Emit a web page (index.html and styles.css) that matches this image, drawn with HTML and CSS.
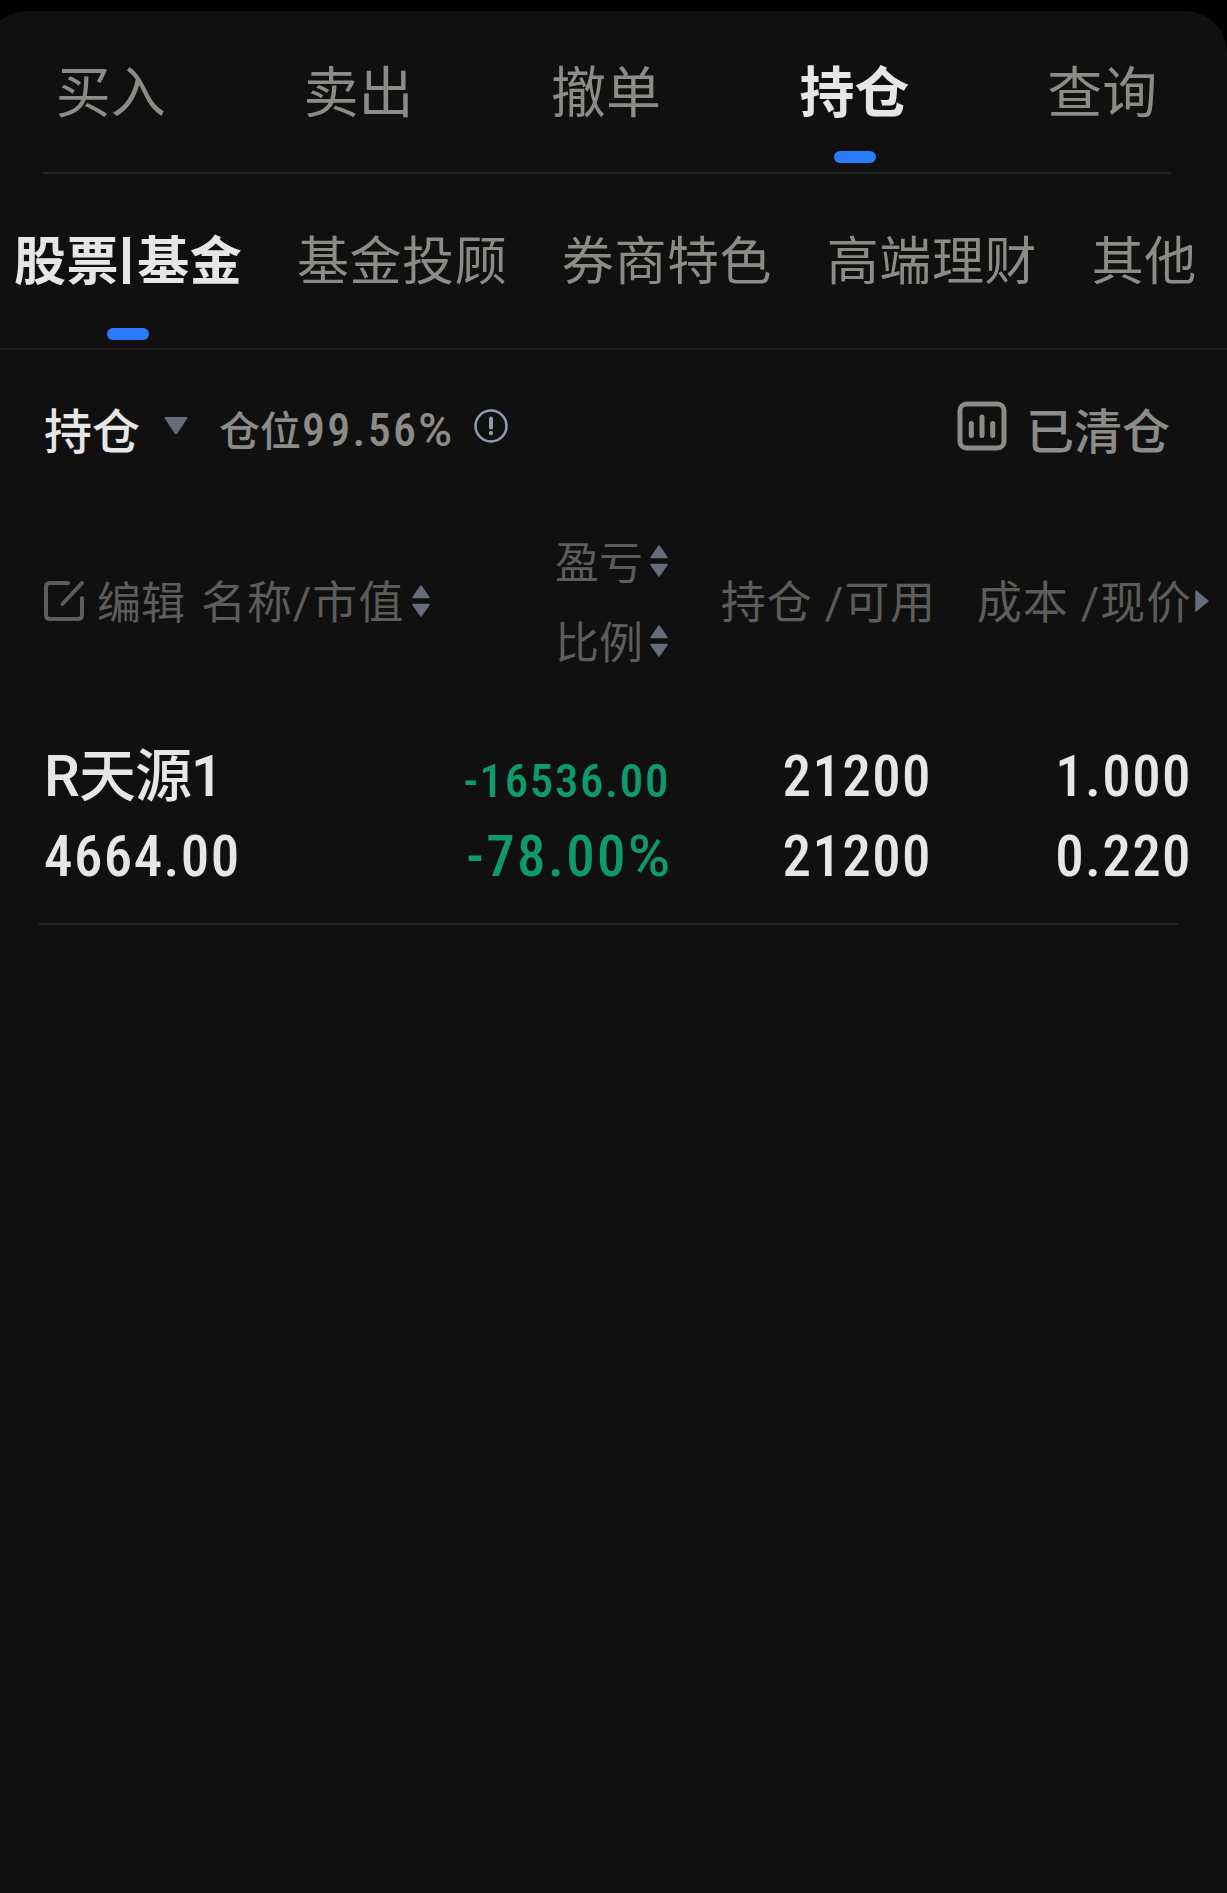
FILE: index.html
```html
<!DOCTYPE html>
<html lang="zh-CN">
<head>
    <meta charset="UTF-8">
    <meta name="viewport" content="width=device-width, initial-scale=1.0">
    <title>持仓</title>
    <link rel="stylesheet" href="styles.css">
</head>
<body>
    <div class="panel">
        <nav class="tabs">
            <div class="tab">买入</div>
            <div class="tab">卖出</div>
            <div class="tab">撤单</div>
            <div class="tab active">持仓</div>
            <div class="tab">查询</div>
        </nav>

        <nav class="subtabs">
            <div class="subtab active">股票<span class="bar"></span>基金</div>
            <div class="subtab">基金投顾</div>
            <div class="subtab">券商特色</div>
            <div class="subtab">高端理财</div>
            <div class="subtab">其他</div>
        </nav>

        <div class="toolbar">
            <span class="title">持仓</span>
            <svg class="caret" viewBox="0 0 24 18"><path d="M1.500 0h21q1.500 0 .8 1.400L13.300 16.500q-1.300 1.600-2.600 0L.7 1.400Q0 0 1.500 0z"/></svg>
            <span class="ratio">仓位<span class="num">99.56<span class="pct">%</span></span></span>
            <svg class="info" viewBox="0 0 34 34">
                <circle cx="17" cy="17" r="15.500"/>
                <path d="M17 9.500v9"/>
                <path d="M17 23.700v.6"/>
            </svg>
            <div class="cleared">
                <svg class="chart" viewBox="0 0 50 50">
                    <rect x="3" y="3" width="44" height="44" rx="6.500"/>
                    <path d="M14.300 22.500v12M25 16v18.500M35.700 22.500v12"/>
                </svg>
                <span>已清仓</span>
            </div>
        </div>

        <div class="grid head">
            <div class="cell-name">
                <svg class="edit" viewBox="0 0 40 40">
                    <path d="M24 2H6Q2 2 2 6v28q0 4 4 4h28q4 0 4-4V17"/>
                    <path d="M38 2L18.500 23"/>
                </svg>
                <span class="edit-label">编辑</span>
                <span class="wide">名称/市值</span>
                <svg class="sort" viewBox="0 0 18 32"><path d="M9 1l8 11.500H1zM9 31l8-11.500H1z"/></svg>
            </div>
            <div class="cell-profit">
                <div class="line">盈亏<svg class="sort" viewBox="0 0 18 32"><path d="M9 1l8 11.500H1zM9 31l8-11.500H1z"/></svg></div>
                <div class="line">比例<svg class="sort" viewBox="0 0 18 32"><path d="M9 1l8 11.500H1zM9 31l8-11.500H1z"/></svg></div>
            </div>
            <div class="cell wide">持仓 /可用</div>
            <div class="cell wide last">成本 /现价<svg class="more" viewBox="0 0 14 22"><path d="M1 1l12 10L1 21z"/></svg></div>
        </div>

        <div class="grid row">
            <div>
                <div class="name">R天源1</div>
                <div>4664.00</div>
            </div>
            <div class="right down">
                <div class="amount">-16536.00</div>
                <div class="percent">-78.00<span class="pct">%</span></div>
            </div>
            <div class="right">
                <div>21200</div>
                <div>21200</div>
            </div>
            <div class="right">
                <div>1.000</div>
                <div>0.220</div>
            </div>
        </div>
    </div>
</body>
</html>
```
FILE: styles.css
```css
* {
    box-sizing: border-box;
}

body {
    margin: 0;
    padding-top: 11px;
    background-color: #000;
    color: #e6e6e6;
    font-family: Roboto, "Noto Sans CJK SC", sans-serif;
    overflow: hidden;
}

/* the sheet runs a little past the left edge */
.panel {
    margin-left: -15px;
    padding-left: 15px;
    min-height: 1882px;
    background-color: #101010;
    border-radius: 42px 42px 0 0;
}

svg {
    display: block;
    flex: none;
}

/* main tabs */
.tabs {
    display: flex;
    height: 163px;
    margin-left: -13px;
    padding: 42px 1px 0 0;
    background: linear-gradient(#222423, #222423) 56px 161px / 1128px 2px no-repeat;
}

.tab {
    flex: 1;
    text-align: center;
    font-size: 55px;
    line-height: 80px;
    color: #8b8b89;
}

.active {
    color: #e6e6e6;
    font-weight: bold;
}

.active::after {
    content: "";
    display: block;
    width: 42px;
    height: 12px;
    margin: 18px auto 0;
    border-radius: 6px;
    background-color: #2b7bff;
}

.tab.active {
    padding-left: 1px;
}

/* product tabs */
.subtabs {
    display: flex;
    height: 176px;
    padding: 54px 0 0 14px;
    gap: 54.5px;
    border-bottom: 2px solid #1a1a1a;
}

.subtab {
    font-size: 52px;
    line-height: 70px;
    letter-spacing: 0.6px;
    color: #8b8b89;
    white-space: nowrap;
}

.subtab.active {
    color: #e6e6e6;
}

.subtab.active::after {
    margin-top: 30px;
}

.bar {
    display: inline-block;
    width: 7px;
    height: 47px;
    margin: 0 7px 0 4px;
    vertical-align: -4px;
    background-color: #e6e6e6;
}

/* position summary */
.toolbar {
    display: flex;
    align-items: center;
    height: 100px;
    margin-top: 26px;
    padding: 0 57px 0 44px;
    font-size: 48px;
}

.toolbar span {
    padding-top: 3px;
}

.title {
    font-weight: 500;
}

.caret {
    width: 24px;
    height: 18px;
    margin-left: 24px;
    fill: #666c7c;
}

.ratio {
    margin-left: 31px;
    font-size: 41px;
    font-weight: 500;
    color: #8b8b89;
}

.num {
    margin-left: 1px;
    font-family: "Roboto Condensed", Roboto, sans-serif;
    font-size: 46px;
    letter-spacing: 2.3px;
}

/* the condensed percent sign is too narrow next to the digits */
.pct {
    font-family: Roboto, sans-serif;
    font-weight: 500;
    letter-spacing: 0;
}

.info {
    width: 34px;
    height: 34px;
    margin-left: 22px;
    fill: none;
    stroke: #8f9bb0;
    stroke-width: 2.5;
    stroke-linecap: round;
}

.info path {
    stroke-width: 4;
}

.cleared {
    display: flex;
    align-items: center;
    gap: 19px;
    margin-left: auto;
    font-weight: 500;
    color: #8b8b89;
}

.chart {
    width: 50px;
    height: 50px;
    fill: none;
    stroke: #8b8b89;
    stroke-width: 5;
    stroke-linecap: round;
}

/* holdings */
.grid {
    display: grid;
    grid-template-columns: 386px 239px 262px 260px;
    padding-left: 44px;
}

.head {
    align-items: center;
    height: 160px;
    margin-top: 48px;
    font-size: 44px;
    line-height: 80px;
    color: #5c5c5a;
    white-space: nowrap;
}

.head svg {
    margin-bottom: 6px;
}

.cell-name,
.line {
    display: flex;
    align-items: center;
}

.line {
    justify-content: flex-end;
}

.wide {
    font-size: 45px;
    letter-spacing: 0.9px;
}

.edit {
    width: 40px;
    height: 40px;
    fill: none;
    stroke: #5c5c5a;
    stroke-width: 4;
    stroke-linecap: round;
}

.edit-label {
    margin: 0 16px 0 13px;
}

.sort {
    width: 18px;
    height: 32px;
    margin-left: 8px;
    fill: #666c7c;
    stroke: #666c7c;
    stroke-width: 1.5;
    stroke-linejoin: round;
}

.line .sort {
    margin: 0 1px 6px 7px;
}

.cell,
.right {
    text-align: right;
}

.cell {
    margin-right: -5px;
}

.last {
    position: relative;
    margin-right: -1px;
}

.more {
    position: absolute;
    left: 100%;
    top: 26px;
    width: 14px;
    height: 22px;
    margin-left: 3px;
    fill: #666c7c;
    stroke: #666c7c;
    stroke-width: 1.5;
    stroke-linejoin: round;
}

.row {
    height: 188px;
    margin-top: 53px;
    font-family: "Roboto Condensed", Roboto, "Noto Sans CJK SC", sans-serif;
    font-size: 57px;
    font-weight: 500;
    line-height: 80px;
    letter-spacing: 1.4px;
    background: linear-gradient(#222423, #222423) 39px 100% / 1139px 2px no-repeat;
}

.row .right {
    margin-right: -1px;
}

.name {
    font-family: Roboto, "Noto Sans CJK SC", sans-serif;
    letter-spacing: -1px;
}

.down {
    color: #0f9a6c;
}

.amount {
    font-size: 47px;
    line-height: 88px;
    margin-bottom: -8px;
    letter-spacing: 1.6px;
}

.percent {
    letter-spacing: 2.4px;
}
```
